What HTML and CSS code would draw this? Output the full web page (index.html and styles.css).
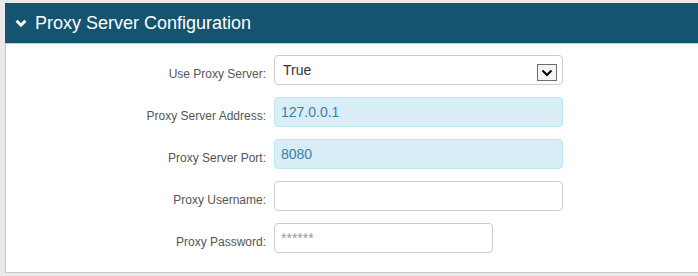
FILE: index.html
```html
<!DOCTYPE html>
<html lang="en">
<head>
    <meta charset="UTF-8">
    <title>Proxy Server Configuration</title>
    <link rel="stylesheet" href="styles.css">
</head>
<body>
    <div class="panel">
        <div class="panel-heading">
            <svg class="chevron" width="12" height="9" viewBox="0 0 12 9">
                <path d="M1.6 1.8 L6 6.2 L10.4 1.8" fill="none" stroke="#fff" stroke-width="3"/>
            </svg>
            <span>Proxy Server Configuration</span>
        </div>
        <div class="panel-body">
            <div class="form-row">
                <label>Use Proxy Server:</label>
                <div class="select-wrap">
                    <select class="field">
                        <option>True</option>
                        <option>False</option>
                    </select>
                    <span class="select-arrow">
                        <svg width="12" height="8" viewBox="0 0 12 8">
                            <path d="M1.5 1.5 L6 6 L10.5 1.5" fill="none" stroke="#000" stroke-width="2"/>
                        </svg>
                    </span>
                </div>
            </div>
            <div class="form-row">
                <label>Proxy Server Address:</label>
                <input class="field info" type="text" value="127.0.0.1">
            </div>
            <div class="form-row">
                <label>Proxy Server Port:</label>
                <input class="field info" type="text" value="8080">
            </div>
            <div class="form-row">
                <label>Proxy Username:</label>
                <input class="field" type="text" value="">
            </div>
            <div class="form-row">
                <label>Proxy Password:</label>
                <input class="field short" type="password" placeholder="******">
            </div>
        </div>
    </div>
</body>
</html>
```

FILE: styles.css
```css
html {
    overflow: hidden;
}
body {
    margin: 0;
    padding: 3px 0 0 5px;
    background-color: #eaeaea;
    font-family: "Liberation Sans", Arial, sans-serif;
}
.panel {
    width: 720px;
    background-color: #fff;
    border-left: 1px solid #c8c8c8;
    border-bottom: 1px solid #c8c8c8;
}
.panel-heading {
    display: flex;
    align-items: center;
    gap: 8px;
    height: 40px;
    margin-left: -1px;
    padding-left: 10px;
    background-color: #145470;
    border-bottom: 1px solid #c3ccd0;
    color: #fff;
    font-size: 18px;
    line-height: 20px;
}
.chevron {
    display: block;
    margin-top: 1px;
}
.panel-body {
    display: flex;
    flex-direction: column;
    gap: 12px;
    padding: 11px 0 19px 0;
}
.form-row {
    display: grid;
    grid-template-columns: 260px auto;
    column-gap: 8px;
    align-items: start;
}
.form-row label {
    padding-top: 11px;
    text-align: right;
    color: #555;
    font-size: 12px;
    line-height: 17px;
}
.field {
    box-sizing: border-box;
    width: 289px;
    height: 30px;
    margin: 0;
    padding: 6px 6px;
    border: 1px solid #ccc;
    border-radius: 4px;
    background-color: #fff;
    color: #333;
    font-family: "Liberation Sans", Arial, sans-serif;
    font-size: 14px;
    line-height: 16px;
    outline: none;
}
.field.info {
    background-color: #d9edf7;
    border-color: #bce8f1;
    color: #3b80a8;
}
.field.short {
    width: 219px;
}
.field::placeholder {
    color: #999;
}
.select-wrap {
    position: relative;
    width: 289px;
}
select.field {
    appearance: none;
    -webkit-appearance: none;
    padding-left: 8px;
}
.select-arrow {
    position: absolute;
    top: 9px;
    right: 6px;
    display: flex;
    align-items: center;
    justify-content: center;
    box-sizing: border-box;
    width: 20px;
    height: 17px;
    border: 1px solid #6f6f6f;
    background-color: #f4f4f4;
    pointer-events: none;
}
```
